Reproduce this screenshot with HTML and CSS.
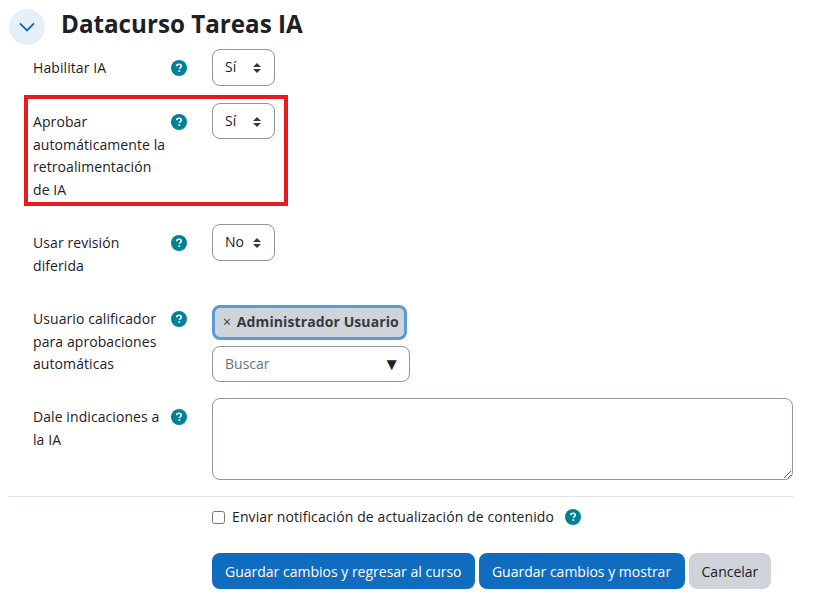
FILE: index.html
```html
<!DOCTYPE html>
<html lang="es">
<head>
    <meta charset="UTF-8">
    <title>Datacurso Tareas IA</title>
    <link rel="stylesheet" href="styles.css">
</head>
<body>
    <svg class="icon-defs" width="0" height="0">
        <symbol id="help" viewBox="0 0 16 16">
            <circle cx="8" cy="8" r="8" fill="#008196"/>
            <path d="M5.7 6.3c0-1.3.9-2 2.3-2s2.3.7 2.3 1.8c0 .9-.5 1.3-1.1 1.7-.6.4-.8.7-.8 1.2" fill="none" stroke="#fff" stroke-width="1.6"/>
            <rect x="7.5" y="10.2" width="1.7" height="1.7" fill="#fff"/>
        </symbol>
    </svg>

    <main class="page">
        <header class="section-head">
            <button class="toggle" type="button" aria-label="Colapsar">
                <svg width="18" height="18" viewBox="0 0 14 14"><path d="M1.5 4.2 7 9.7l5.5-5.5" fill="none" stroke="#0f6cbf" stroke-width="1.5"/></svg>
            </button>
            <h2>Datacurso Tareas IA</h2>
        </header>

        <form class="form">
            <div class="row row-first">
                <label class="label">Habilitar IA</label>
                <svg class="help"><use href="#help"/></svg>
                <div class="select">Sí<span class="arrows"></span></div>
            </div>

            <div class="row row-marked">
                <label class="label">Aprobar automáticamente la retroalimentación de IA</label>
                <svg class="help"><use href="#help"/></svg>
                <div class="select">Sí<span class="arrows"></span></div>
                <div class="highlight"></div>
            </div>

            <div class="row row-defer">
                <label class="label">Usar revisión diferida</label>
                <svg class="help"><use href="#help"/></svg>
                <div class="select">No<span class="arrows"></span></div>
            </div>

            <div class="row row-grader">
                <label class="label">Usuario calificador para aprobaciones automáticas</label>
                <svg class="help"><use href="#help"/></svg>
                <div class="picker">
                    <div class="chip"><span class="chip-x">×</span> Administrador Usuario</div>
                    <div class="search">Buscar<span class="search-arrow">▼</span></div>
                </div>
            </div>

            <div class="row row-prompt">
                <label class="label">Dale indicaciones a la IA</label>
                <svg class="help"><use href="#help"/></svg>
                <textarea class="textarea"></textarea>
            </div>

            <hr class="divider">

            <div class="notify">
                <input type="checkbox" class="check">
                <span>Enviar notificación de actualización de contenido</span>
                <svg class="help"><use href="#help"/></svg>
            </div>

            <div class="actions">
                <button class="btn btn-primary" type="button">Guardar cambios y regresar al curso</button>
                <button class="btn btn-primary" type="button">Guardar cambios y mostrar</button>
                <button class="btn btn-secondary" type="button">Cancelar</button>
            </div>
        </form>
    </main>
</body>
</html>
```

FILE: styles.css
```css
:root {
    --text: #1d2125;
    --primary: #0f6cbf;
    --border: #8f959e;
    --muted: #ced4da;
}

body {
    margin: 0;
    background: #fff;
    color: var(--text);
    font-family: "Open Sans", "Noto Sans", sans-serif;
    font-size: 14px;
    line-height: 22.5px;
}

.icon-defs {
    position: absolute;
}

.page {
    padding: 9px 26px 0 9px;
}

/* cabecera */
.section-head {
    display: flex;
    align-items: center;
    gap: 16px;
    height: 36px;
}

.section-head h2 {
    margin: 0 0 6px;
    font-size: 24.2px;
    font-weight: 700;
    line-height: 30px;
}

.toggle {
    display: grid;
    place-items: center;
    width: 36px;
    height: 36px;
    padding: 0;
    border: 0;
    border-radius: 50%;
    background: #e7eff8;
}

/* filas del formulario */
.row {
    position: relative;
    display: flex;
    align-items: flex-start;
    padding-left: 24px;
}

.row-first {
    margin-top: 4px;
    margin-bottom: 17px;
}

.row-marked {
    height: 121px;
}

.row-defer {
    height: 81px;
}

.row-grader {
    height: 93px;
}

.row-prompt {
    height: 90px;
}

.label {
    width: 137px;
    padding-top: 8px;
    flex: none;
    letter-spacing: 0.08px;
}

.row-grader .label {
    padding-top: 3px;
}

.help {
    flex: none;
    width: 16px;
    height: 16px;
    margin: 11px 0 0 1px;
}

.row-grader .help {
    margin-top: 6px;
}

.select {
    display: flex;
    align-items: center;
    justify-content: space-between;
    box-sizing: border-box;
    width: 63px;
    height: 37px;
    margin-left: 25px;
    padding: 0 13px 0 12px;
    border: 1px solid var(--border);
    border-radius: 8px;
}

.row-marked .select {
    height: 36px;
    padding-top: 1px;
}

.arrows {
    position: relative;
    width: 8px;
    height: 10px;
}

.arrows::before,
.arrows::after {
    content: "";
    position: absolute;
    left: 0;
    border-left: 4px solid transparent;
    border-right: 4px solid transparent;
}

.arrows::before {
    top: 0;
    border-bottom: 4px solid #343a40;
}

.arrows::after {
    bottom: 0;
    border-top: 4px solid #343a40;
}

/* marca roja de la captura */
.highlight {
    position: absolute;
    left: 15px;
    top: -8px;
    width: 264px;
    height: 111px;
    box-sizing: border-box;
    border: 4px solid #e81c1f;
}

/* selector de usuario */
.picker {
    display: flex;
    flex-direction: column;
    align-items: flex-start;
    gap: 6px;
    margin-left: 25px;
}

.chip {
    box-sizing: border-box;
    height: 35px;
    padding: 3px 5px 0 8px;
    border: 3px solid #5b9bd5;
    border-radius: 8px;
    background: var(--muted);
    font-weight: 700;
    white-space: nowrap;
    letter-spacing: 0.1px;
    color: #343a40;
}

.chip-x {
    margin-right: 2px;
    font-weight: 400;
}

.search {
    display: flex;
    align-items: center;
    justify-content: space-between;
    box-sizing: border-box;
    width: 198px;
    height: 36px;
    padding: 1px 9px 0 12px;
    border: 1px solid var(--border);
    border-radius: 8px;
    color: #6a737b;
}

.search-arrow {
    color: var(--text);
    font-size: 17px;
}

.textarea {
    display: block;
    box-sizing: border-box;
    width: 581px;
    height: 82px;
    margin: 0 0 0 25px;
    border: 1px solid var(--border);
    border-radius: 8px;
}

.divider {
    height: 1px;
    margin: 8px 0 0;
    border: 0;
    background: #dee2e6;
}

.notify {
    display: flex;
    align-items: center;
    height: 22px;
    margin: 9px 0 0 203px;
    letter-spacing: 0.1px;
}

.notify .help {
    margin: 0 0 0 11px;
}

.check {
    width: 13px;
    height: 13px;
    margin: 0 7px 0 0;
}

.actions {
    display: flex;
    gap: 4px;
    margin: 25px 0 0 203px;
}

.btn {
    height: 36px;
    padding: 2px 13px 0;
    border: 0;
    border-radius: 8px;
    font: inherit;
}

.btn-primary {
    background: var(--primary);
    color: #fff;
}

.btn-primary + .btn-primary {
    width: 206px;
}

.btn-secondary {
    width: 82px;
    background: var(--muted);
    color: var(--text);
}
```
